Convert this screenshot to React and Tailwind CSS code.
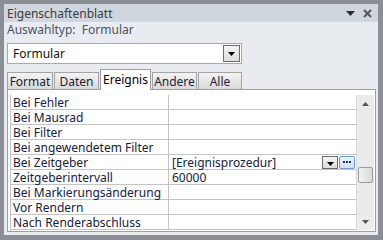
import React from "react";

const rows = [
  ["Bei Fehler", ""],
  ["Bei Mausrad", ""],
  ["Bei Filter", ""],
  ["Bei angewendetem Filter", ""],
  ["Bei Zeitgeber", "[Ereignisprozedur]"],
  ["Zeitgeberintervall", "60000"],
  ["Bei Markierungsänderung", ""],
  ["Vor Rendern", ""],
  ["Nach Renderabschluss", ""],
];

function Tri() {
  return (
    <svg width="7" height="4" viewBox="0 0 7 4">
      <path d="M0 0h7L3.5 4z" fill="#000" />
    </svg>
  );
}

export default function App() {
  const tabs = ["Format", "Daten", "Ereignis", "Andere", "Alle"];
  const tabW = [46, 45, 51, 45, 44];
  return (
    <div
      className="w-[383px] h-[240px] bg-[#8b8f95] pt-[4px] pl-[4px] pr-[5px] pb-[5px] text-[12px] leading-[14px]"
      style={{ fontFamily: '"Noto Sans", "Open Sans", sans-serif' }}
    >
      <div className="w-full h-full bg-[#e8ebef] flex flex-col">
        <div className="h-[18px] bg-[#cfd6de] flex items-center pl-[3px] pr-[6px]">
          <span className="text-[#3c3c3c] leading-[16px] mt-[1px]">Eigenschaftenblatt</span>
          <div className="ml-auto flex items-center gap-[8px]">
            <svg width="9" height="5" viewBox="0 0 9 5">
              <path d="M0 0h9L4.5 5z" fill="#2b2b2b" />
            </svg>
            <svg width="9" height="9" viewBox="0 0 9 9">
              <path d="M1 1L8 8M8 1L1 8" stroke="#555" strokeWidth="2" />
            </svg>
          </div>
        </div>
        <div className="h-[14px] flex items-center pl-[3px] text-[#4a5462]">
          <span className="leading-[14px] mt-[1px]">Auswahltyp:&nbsp;&nbsp;Formular</span>
        </div>
        <div className="ml-[3px] mt-[7px] w-[235px] h-[21px] bg-white border border-[#a9a9a9] flex items-center pl-[5px] pr-[1px]">
          <span className="text-[#111] leading-[15px]">Formular</span>
          <div className="ml-auto w-[17px] h-[17px] border border-[#6d6d6d] bg-gradient-to-b from-[#f4f4f4] to-[#dcdcdc] flex items-center justify-center">
            <Tri />
          </div>
        </div>
        <div className="ml-[3px] mt-[5px] h-[20px] flex items-end">
          {tabs.map((t, i) => {
            const active = t === "Ereignis";
            return (
              <div
                key={t}
                style={{ width: tabW[i] }}
                className={
                  active
                    ? "h-[21px] -mb-px bg-white border border-b-0 border-[#9d9d9d] flex items-start justify-center pt-[3px] text-black z-10 relative mr-px"
                    : "h-[17px] bg-gradient-to-b from-[#f3f3f3] to-[#d9d9d9] border border-b-0 border-[#a3a3a3] flex items-start justify-center pt-[2px] text-[#1b2436] mr-px"
                }
              >
                <span className="leading-[14px]">{t}</span>
              </div>
            );
          })}
        </div>
        <div className="ml-[3px] mr-[2px] h-[143px] bg-white border border-[#9d9d9d] pt-[5px] pl-[2px] flex">
          <div className="w-[346px] border-l border-[#c4c4c4]">
            {rows.map(([l, v]) => (
              <div key={l} className="h-[15px] flex border-b border-[#c4c4c4] text-[#14213d]">
                <div className="w-[158px] border-r border-[#c4c4c4] pl-[2px] flex items-center">
                  <span className="leading-[13px] mt-[1px]">{l}</span>
                </div>
                <div className="flex-1 pl-[3px] flex items-center">
                  {v && <span className="leading-[13px] mt-[1px]">{v}</span>}
                  {l === "Bei Zeitgeber" && (
                    <div className="ml-auto flex items-center gap-[1px] pr-[1px]">
                      <div className="w-[16px] h-[13px] border border-[#6d6d6d] bg-gradient-to-b from-[#f4f4f4] to-[#dcdcdc] flex items-end justify-center pb-[2px]">
                        <Tri />
                      </div>
                      <div className="w-[16px] h-[13px] border border-[#6f9bd1] rounded-[2px] bg-gradient-to-b from-[#eaf3fd] to-[#cfe2f8] flex items-center justify-center">
                        <svg width="8" height="2" viewBox="0 0 8 2">
                          <rect x="0" y="0" width="2" height="2" fill="#1e3050" />
                          <rect x="3" y="0" width="2" height="2" fill="#1e3050" />
                          <rect x="6" y="0" width="2" height="2" fill="#1e3050" />
                        </svg>
                      </div>
                    </div>
                  )}
                </div>
              </div>
            ))}
          </div>
          <div className="w-[18px] h-[135px] bg-[#ebebeb] border-l border-[#d8d8d8] flex flex-col items-center">
            <div className="h-[17px] flex items-center justify-center">
              <svg width="7" height="4" viewBox="0 0 7 4">
                <path d="M0 4h7L3.5 0z" fill="#555" />
              </svg>
            </div>
            <div className="mt-[55px] w-[15px] h-[16px] border border-[#9a9a9a] rounded-[2px] bg-gradient-to-r from-[#f2f2f2] to-[#dadada]" />
            <div className="mt-auto h-[17px] flex items-center justify-center">
              <svg width="7" height="4" viewBox="0 0 7 4">
                <path d="M0 0h7L3.5 4z" fill="#555" />
              </svg>
            </div>
          </div>
        </div>
      </div>
    </div>
  );
}
